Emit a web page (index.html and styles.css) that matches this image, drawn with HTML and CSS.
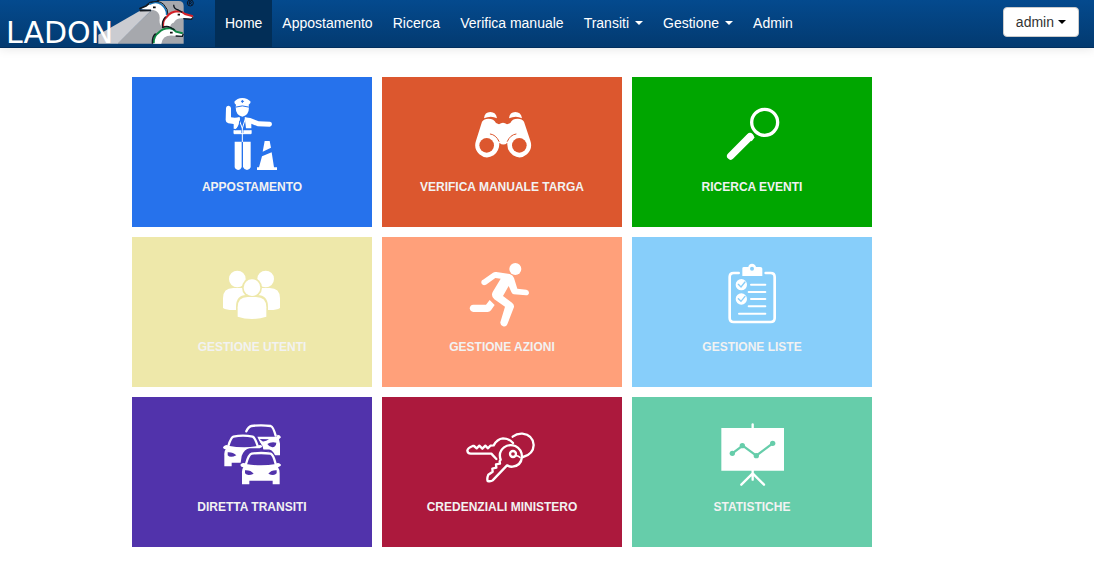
FILE: index.html
```html
<!DOCTYPE html>
<html lang="it">
<head>
<meta charset="utf-8">
<meta name="viewport" content="width=device-width, initial-scale=1">
<title>Ladon</title>
<link rel="stylesheet" href="styles.css">
</head>
<body>
<header class="navbar">
  <a class="brand" href="#" aria-label="Ladon">
    <svg class="logo" viewBox="0 0 215 48">
      <g transform="translate(90 0) scale(.3333)">
        <path fill="#a6a8ad" d="M185 30L80 131h201V18q0-15-15-15h-76z"/>
        <path fill="#cbccd1" d="M25 104L150 32l34-1L82 131H25z"/>
        <path fill="#fff" d="M153 27l22-15q22-14 40-1 17 12 18 36l-12 17q-3 12-2 20-13-10-10-29 1-20-19-25-17 0-34-2z"/>
        <path fill="none" stroke="#111820" stroke-width="5" d="M148 26l20-8 13-10 20-3 6-5M149 32l34-1"/>
        <path fill="none" stroke="#1673b8" stroke-width="5" d="M178 13q20-12 36 0 17 13 16 32"/>
        <path fill="none" stroke="#111820" stroke-width="3" d="M182 8q24-9 39 5 14 14 13 32"/>
        <path fill="#fff" d="M220 82q-3-18 10-31l21-17q20-6 31 7l28 9-1 6-28-1q-22-2-30 13-10 2-10 13z"/>
        <path fill="none" stroke="#d32027" stroke-width="6" d="M221 84q-6-22 10-34 11-15 32-16 13 0 22 8l24 7"/>
        <path fill="none" stroke="#111820" stroke-width="4" d="M251 14q0 12 14 16l12 7M310 52l-6 6-24-2M218 84q-4-20 9-34"/>
        <path fill="#fff" d="M190 131q-1-21 15-32 13-15 34-14 12 0 18 11l22 6-3 7-25-2q-33-4-37 24z"/>
        <path fill="none" stroke="#0d8742" stroke-width="6" d="M191 130q-1-22 15-32 12-14 34-13 11 1 18 10l20 5"/>
        <path fill="none" stroke="#111820" stroke-width="4" d="M218 82q12-5 23 0l13 8M280 101l-3 8-20-1M187 131q-1-22 10-30"/>
        <path stroke="#111" stroke-width="5" d="M189 22h8M263 44h7M240 98h8"/>
        <circle cx="301" cy="9" r="9" fill="none" stroke="#0b1626" stroke-width="3"/>
        <path fill="none" stroke="#0b1626" stroke-width="3" d="M298 14V5h5q3 3 0 5h-5m3 0 4 4"/>
      </g>
      <text class="logo-text" x="6" y="43">LADON</text>
    </svg>
  </a>
  <nav class="menu">
    <a class="menu-item active" href="#">Home</a>
    <a class="menu-item" href="#">Appostamento</a>
    <a class="menu-item" href="#">Ricerca</a>
    <a class="menu-item" href="#">Verifica manuale</a>
    <a class="menu-item" href="#">Transiti<span class="caret"></span></a>
    <a class="menu-item" href="#">Gestione<span class="caret"></span></a>
    <a class="menu-item" href="#">Admin</a>
  </nav>
  <button class="user" type="button">admin<span class="caret"></span></button>
</header>

<main class="tiles">
  <a class="tile blue" href="#">
    <svg class="icon" viewBox="36 21 240 240">
      <path d="M103 50q8-10 24-11 16 1 25 11 0 5-6 9l1 7q0 25-20 29-20-4-20-29l1-7q-5-3-5-9z"/>
      <path class="cut-line thin" d="M108 66q19-7 38 0M124 49h7M127 46v7"/>
      <path d="M78 69q1-7 8-7 6 1 7 7v28l11 1 16-1-1 17-10 18-8-1v-14l-16-2q-8-2-8-10zM134 97l17 2 25 10 34 1q6 1 6 8-1 7-7 7l-36-1-19-8v14h-16zM102 136h22v10h-22zM130 136h24v10h-24zM104 170h21v76q-3 9-11 9-8 0-10-8zM129 170h23v77q-3 8-11 8-8 0-12-9z"/>
      <path class="line thin" d="M115 98l12 32 10-32M127 128v42M102 137v9h51v-9"/>
      <path class="cut-line thin" d="M119 108l-2 17-9 8"/>
      <path d="M194 168h15l4 20-25 12zM186 214l29-12 7 45h9v8h-60v-8h6z"/>
    </svg>
    <span class="label">APPOSTAMENTO</span>
  </a>
  <a class="tile orange" href="#">
    <svg class="icon" viewBox="36 21 240 240">
      <path d="M102 100q2-19 19-19t20 19q-18-10-39 0zM177 100q2-19 19-19t20 19q-18-10-39 0z"/>
      <path d="M96 110q6-9 19-9 17 0 23 13l9 4q12-9 24 0l10-4q5-13 22-13 14 0 19 9l19 57q8 23-10 41-20 17-42 3-19-14-17-38-12 11-24 0 1 24-17 38-23 14-43-3-18-18-10-41z"/>
      <circle class="cut" cx="110" cy="181" r="22"/>
      <circle class="cut" cx="208" cy="181" r="22"/>
      <path class="cut-line thin" d="M121 147q17 2 26 22M198 147q-17 2-26 22"/>
    </svg>
    <span class="label">VERIFICA MANUALE TARGA</span>
  </a>
  <a class="tile green" href="#">
    <svg class="icon" viewBox="36 21 240 240">
      <circle class="line" cx="194" cy="112" r="39" stroke-width="10"/>
      <path class="line" stroke-width="22" d="M92 213l58-58"/>
      <path d="M138 152l12-9 14 14-9 12z"/>
    </svg>
    <span class="label">RICERCA EVENTI</span>
  </a>
  <a class="tile sand" href="#">
    <svg class="icon" viewBox="36 6 240 240">
      <circle cx="112" cy="87" r="25"/>
      <circle cx="197" cy="87" r="25"/>
      <path d="M69 145q0-31 31-31h37v66H99q-20 0-30-6zM240 145q0-31-31-31h-36v66h38q19 0 29-6z"/>
      <circle class="cut" cx="156" cy="113" r="30"/>
      <path class="cut" d="M108 170q0-34 31-35h33q32 1 32 35v39h-96z"/>
      <circle cx="156" cy="113" r="25"/>
      <path d="M113 172q0-31 30-31h25q31 0 31 31v28q-19 7-43 7-23 0-43-7z"/>
    </svg>
    <span class="label">GESTIONE UTENTI</span>
  </a>
  <a class="tile salmon" href="#">
    <svg class="icon" viewBox="36 6 240 240">
      <circle cx="196" cy="57" r="18"/>
      <path d="M97 91l32-23q4-3 10-2l40 6q10 3 13 12l10 32 27 3q8 2 8 9t-9 8l-37-3q-5-2-7-7l-8-18-17 30 27 20q7 5 6 13l-20 52q-4 9-13 6-9-4-8-12l14-47-32-22q-11-10-5-22l24-40-16-2-28 20q-9 4-13-3-3-6 2-12z"/>
      <path d="M70 164h38l11-14 15 15-11 16q-4 5-10 5H70q-10-2-11-11 1-10 11-11z"/>
    </svg>
    <span class="label">GESTIONE AZIONI</span>
  </a>
  <a class="tile sky" href="#">
    <svg class="icon" viewBox="36 6 240 240">
      <path class="line" stroke-width="8" d="M116 69h-15q-12 0-12 12v123q0 12 12 12h111q12 0 12-12V81q0-12-12-12h-15"/>
      <path d="M127 55q0-4 5-4h13q1-9 11-10 10 1 12 10h13q6 0 6 5v22h-60z"/>
      <circle class="cut" cx="156" cy="56" r="6"/>
      <circle cx="124" cy="104" r="17"/>
      <circle cx="124" cy="147" r="17"/>
      <path class="cut-line" stroke-width="4" d="M115 103l8 8 12-15M115 146l8 8 12-15"/>
      <path class="line" stroke-width="6" d="M153 104h43M146 126h50M153 147h43M146 169h50M117 191h79"/>
    </svg>
    <span class="label">GESTIONE LISTE</span>
  </a>
  <a class="tile purple" href="#">
    <svg class="icon" viewBox="36 6 240 240">
      <path class="line" stroke-width="7" d="M139 64q6-14 15-16 29-4 58 0 8 3 15 29"/>
      <path d="M172 80h57l4-6q8 1 10 8l-6 6 3 13v35h-22v-8l-28-8q-8-20-18-40z"/>
      <path class="cut" d="M202 102q10-7 27-4-1 13-12 14-10-1-15-10zM179 87l28 1q-9 7-20 6z"/>
      <path class="cut" d="M76 112l10-37 16-6h56l16 20 14 20 4 20-64 40H76z"/>
      <path class="line" stroke-width="7" d="M85 108q8-26 15-28 29-6 58 0 7 3 15 28"/>
      <path d="M84 107q-6-5-14 3-3 4 3 7l4 1q-5 6-4 18v33h22v-11h27l3-20q8-21 24-23h30l9-5q-4-8-12-4l-4 2q-40 8-88-1z"/>
      <path class="cut" d="M83 127q16-1 26 9-18 9-26 0z"/>
      <path class="cut-line" stroke-width="7" d="M131 152q7-26 23-30h53q13 3 20 30"/>
      <path class="line" stroke-width="7" d="M138 162q8-29 17-31 28-4 57 0 8 3 15 31"/>
      <path d="M138 162q-7-7-16 1-2 5 4 8l4 1q-5 6-4 18v33h22v-11h70v11h21v-33q0-12-5-18l6-3q5-3 1-7-8-6-13 0-45 8-90 0z"/>
      <path class="cut" d="M135 181q17-1 26 10-18 8-26-1zM230 181q-16-1-25 10 17 8 25-1z"/>
    </svg>
    <span class="label">DIRETTA TRANSITI</span>
  </a>
  <a class="tile crimson" href="#">
    <svg class="icon" viewBox="36 6 240 240">
      <path class="line" stroke-width="7" d="M188 80q13-10 29-9 32 4 34 34-1 28-32 36M189 99q-12-14-30-14-18 2-28 21l-10 1-7 8-8-8-9 9-9-9-8 8-8-7h-4q-15 6-16 14 1 9 10 9h62l15 16"/>
      <path class="line" stroke-width="7" d="M152 149q-8-23 10-37 15-11 34-4 20 10 20 33-3 26-28 29-9 1-17-4l-43 45q-5 4-15 2-3-7 2-19l13-9-1-9 12-3-1-10 12-2-1-7z"/>
      <circle class="line" cx="189" cy="132" r="9" stroke-width="7"/>
      <path class="line" stroke-width="5" d="M197 137q7 0 13 5"/>
    </svg>
    <span class="label">CREDENZIALI MINISTERO</span>
  </a>
  <a class="tile mint" href="#">
    <svg class="icon" viewBox="36 6 240 240">
      <path d="M64 54h188v128H64z"/>
      <path class="line" stroke-width="7" d="M158 43v166M158 190l-34 34M158 190l34 34"/>
      <path class="cut-line" stroke-width="7" d="M97 130l31-23 41 30 49-37"/>
      <circle class="cut" cx="97" cy="130" r="8"/>
      <circle class="cut" cx="127" cy="107" r="8"/>
      <circle class="cut" cx="169" cy="137" r="8"/>
      <circle class="cut" cx="218" cy="100" r="8"/>
    </svg>
    <span class="label">STATISTICHE</span>
  </a>
</main>
</body>
</html>
```

FILE: styles.css
```css
* { box-sizing: border-box; }

body {
  margin: 0;
  background: #fff;
  font-family: "Liberation Sans", Arial, sans-serif;
  font-size: 14px;
  line-height: 20px;
}

.navbar {
  display: flex;
  align-items: stretch;
  min-height: 48px;
  padding-right: 15px;
  background: linear-gradient(#044a8e, #033a70);
  border-bottom: 1px solid #022f5e;
  box-shadow: 0 1px 10px rgba(0, 0, 0, .1);
}

.brand { display: flex; flex: none; }
.logo { width: 215px; height: 48px; margin-bottom: -1px; overflow: visible; }
.logo-text { font-family: "DejaVu Sans", sans-serif; font-size: 30px; fill: #fff; }

.menu { display: flex; flex: 1; flex-wrap: wrap; }

.menu-item {
  display: flex;
  align-items: center;
  padding: 13px 10px 14px;
  color: #fff;
  text-decoration: none;
}

.menu-item.active { background: #022e57; }

.caret {
  display: inline-block;
  margin-left: 6px;
  border-top: 4px solid;
  border-right: 4px solid transparent;
  border-left: 4px solid transparent;
}

.user {
  display: flex;
  align-items: center;
  align-self: flex-start;
  margin-top: 7px;
  padding: 4px 12px;
  border: 1px solid #ccc;
  border-radius: 4px;
  background: #fff;
  color: #333;
  font: inherit;
}

.user .caret { margin-left: 4px; border-top-color: #000; }

.tiles {
  display: grid;
  grid-template-columns: repeat(auto-fill, 240px);
  gap: 10px;
  max-width: 830px;
  margin: 29px auto;
}

.tile {
  display: flex;
  flex-direction: column;
  align-items: center;
  gap: 5px;
  min-height: 150px;
  padding-top: 15px;
  background: var(--color);
  text-decoration: none;
}

.blue { --color: #2672ec; }
.orange { --color: #dc572e; }
.green { --color: #00a600; }
.sand { --color: #eee8aa; }
.salmon { --color: #ffa07a; }
.sky { --color: #87cefa; }
.purple { --color: #5133ab; }
.crimson { --color: #ac193d; }
.mint { --color: #66cdaa; }

.icon { width: 80px; height: 80px; fill: #fff; }
.line { fill: none; stroke: #fff; stroke-linecap: round; stroke-linejoin: round; }
.cut { fill: var(--color); }
.cut-line { fill: none; stroke: var(--color); stroke-linecap: round; }
.thin { stroke-width: 3px; }

.label {
  color: #f2f2f2;
  font-size: 12px;
  font-weight: bold;
  line-height: 20px;
}
```
